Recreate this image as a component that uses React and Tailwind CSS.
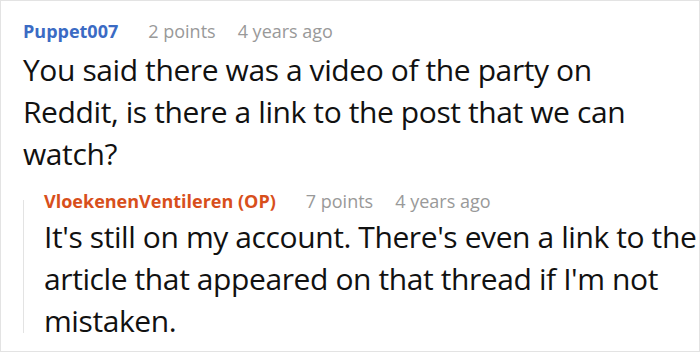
export default function App() {
  return (
    <div className="w-[700px] h-[352px] bg-white border border-[#e3e3e3] overflow-hidden" style={{ fontFamily: '"Open Sans", "Noto Sans", sans-serif' }}>
      <div className="pl-[22px] pt-[15px]">
        <div className="flex items-baseline text-[18px] leading-[30px]">
          <span className="font-bold text-[#3b6bc4]">Puppet007</span>
          <span className="ml-[30px] text-[#999999]">2 points</span>
          <span className="ml-[22px] text-[#999999]">4 years ago</span>
        </div>
        <p className="text-[30px] leading-[42px] tracking-[-0.4px] text-[#111111] mt-[3px] pr-[40px]">
          You said there was a video of the party on Reddit, is there a link to the post that we can watch?
        </p>
        <div className="mt-[11px] flex">
          <div className="w-px bg-[#e3e3e3] mt-[14px] mb-[9px] shrink-0" />
          <div className="pl-[20px] min-w-0">
            <div className="flex items-baseline text-[18px] leading-[30px]">
              <span className="font-bold text-[#d84f1c]">VloekenenVentileren (OP)</span>
              <span className="ml-[30px] text-[#999999]">7 points</span>
              <span className="ml-[22px] text-[#999999]">4 years ago</span>
            </div>
            <p className="text-[30px] leading-[42px] tracking-[-0.4px] text-[#111111]">
              It's still on my account. There's even a link to the article that appeared on that thread if I'm not mistaken.
            </p>
          </div>
        </div>
      </div>
    </div>
  );
}
